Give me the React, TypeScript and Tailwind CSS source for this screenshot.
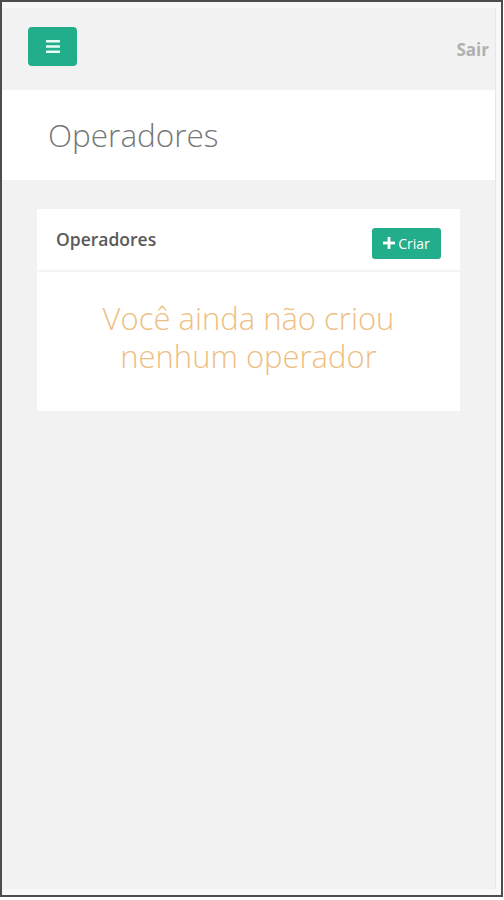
const font = { fontFamily: '"Open Sans", "Liberation Sans", sans-serif' };

export default function App() {
  return (
    <div className="w-[504px] h-[900px] bg-white" style={font}>
      <div className="w-[503px] h-[897px] border-2 border-[#4d4d4d] bg-[#f8f8f8] pt-[6px] pr-[5px] pb-[6px] flex flex-col">
        <div className="flex-1 bg-[#f2f2f2] border-r border-[#e6e6e6] flex flex-col">
          {/* Top bar */}
          <div className="h-[82px] flex items-start justify-between pl-[26px] pr-[6px] pt-[19px]">
            <button className="w-[49px] h-[39px] rounded-[4px] bg-[#22ad8b] flex items-center justify-center">
              <svg width="14" height="13" viewBox="0 0 14 13">
                <rect x="0" y="0" width="14" height="2.6" rx="0.6" fill="#e8fbf5" />
                <rect x="0" y="5.2" width="14" height="2.6" rx="0.6" fill="#e8fbf5" />
                <rect x="0" y="10.4" width="14" height="2.6" rx="0.6" fill="#e8fbf5" />
              </svg>
            </button>
            <span className="text-[17px] font-bold text-[#b0b0b0] mt-[10px]">Sair</span>
          </div>

          {/* Page header */}
          <div className="h-[90px] bg-white flex items-center pl-[46px]">
            <h1 className="text-[31.5px] font-light text-[#777777] leading-none">Operadores</h1>
          </div>

          {/* Card */}
          <div className="mx-[35px] mt-[29px] bg-white">
            <div className="h-[63px] flex items-center justify-between pl-[19px] pr-[19px] border-b-2 border-[#f4f4f4]">
              <span className="text-[17.5px] font-semibold text-[#5a5a5a] -mt-[1px]">Operadores</span>
              <button className="w-[69px] h-[31px] rounded-[3px] bg-[#22ad8b] flex items-center justify-center gap-[3px] text-white text-[14px] mt-[7px]">
                <svg width="12" height="12" viewBox="0 0 12 12">
                  <rect x="4.6" y="0" width="2.8" height="12" fill="white" />
                  <rect x="0" y="4.6" width="12" height="2.8" fill="white" />
                </svg>
                <span>Criar</span>
              </button>
            </div>
            <div className="pt-[27px] pb-[36px] px-4 text-center">
              <p className="text-[31px] font-light text-[#eebf83] leading-[38px]">
                Você ainda não criou
                <br />
                nenhum operador
              </p>
            </div>
          </div>
        </div>
      </div>
    </div>
  );
}
